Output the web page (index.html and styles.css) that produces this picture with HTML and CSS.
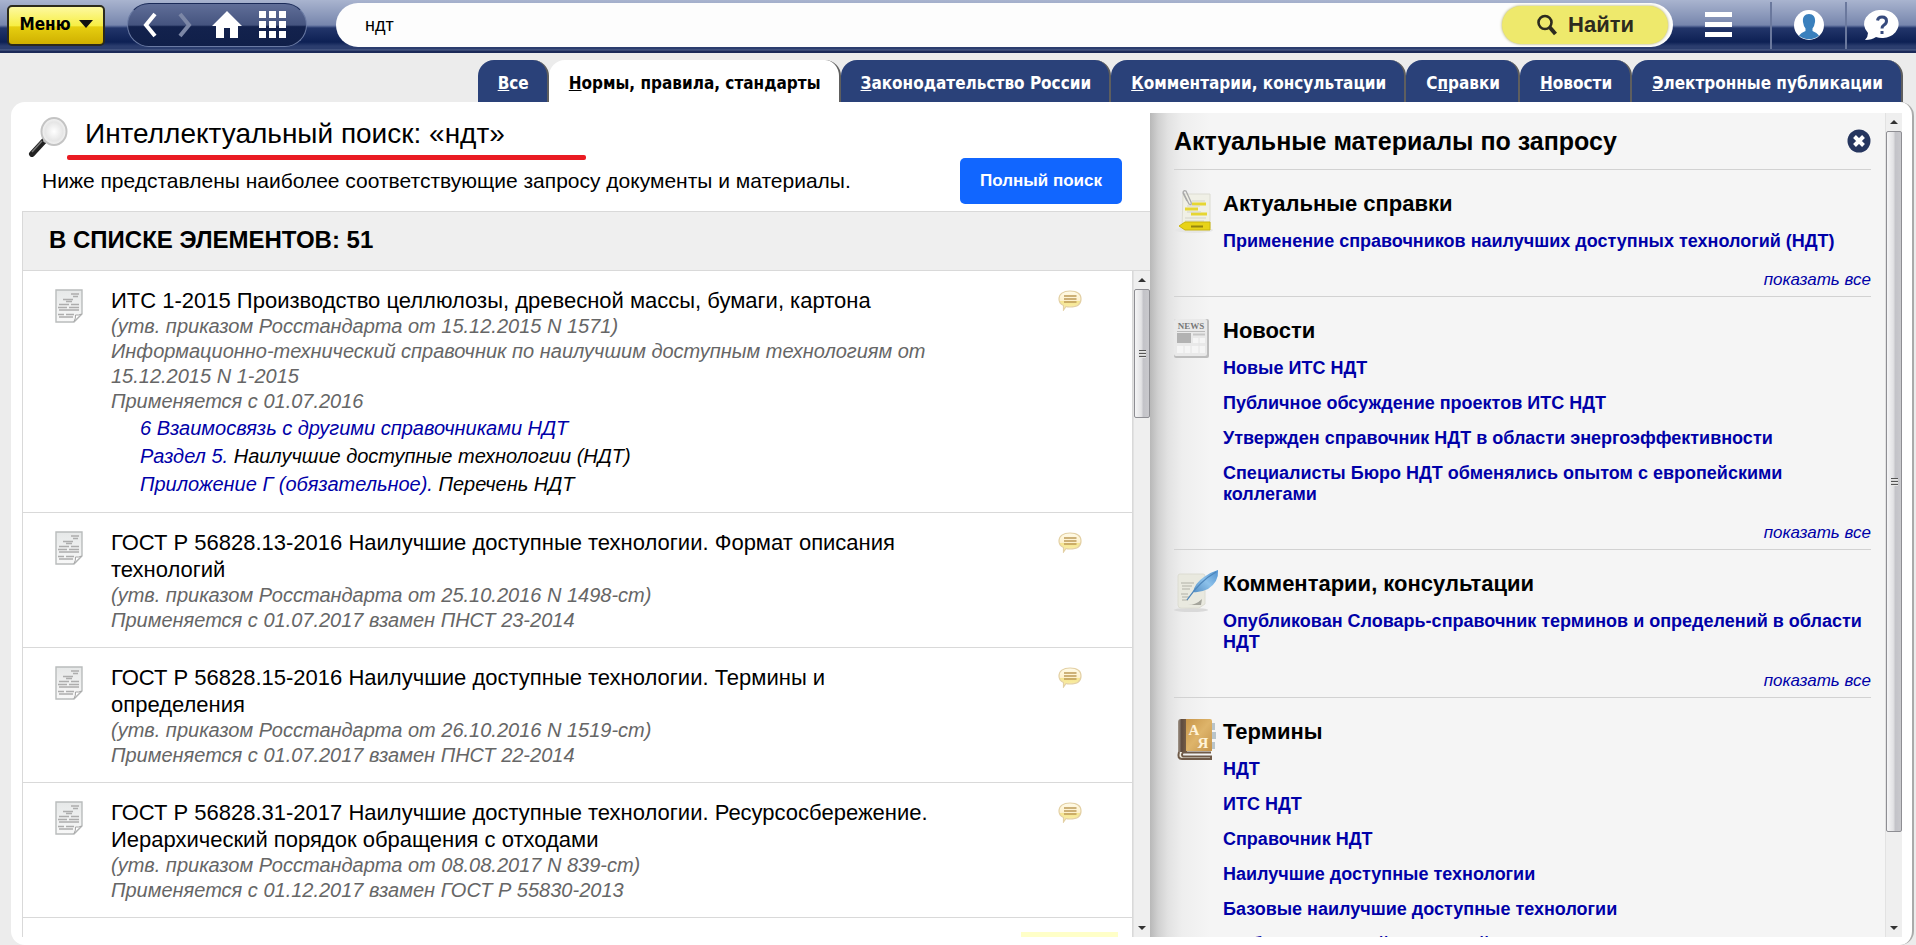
FILE: index.html
```html
<!DOCTYPE html>
<html lang="ru">
<head>
<meta charset="utf-8">
<title>Интеллектуальный поиск: «ндт»</title>
<link rel="stylesheet" href="styles.css">
</head>
<body>
<svg class="defs" aria-hidden="true">
  <defs>
    <linearGradient id="paper" x1="0" y1="0" x2="0" y2="1"><stop offset="0" stop-color="#e6e8e8"/><stop offset="1" stop-color="#f8f8f8"/></linearGradient>
    <linearGradient id="balloon" x1="0" y1="0" x2="0" y2="1"><stop offset="0" stop-color="#fffbe8"/><stop offset=".5" stop-color="#fdf0cc"/><stop offset=".55" stop-color="#f5e592"/><stop offset="1" stop-color="#fbf0ac"/></linearGradient>
    <linearGradient id="feather" x1="1" y1="0" x2="0" y2="1"><stop offset="0" stop-color="#4f90cf"/><stop offset=".5" stop-color="#8cc1ea"/><stop offset="1" stop-color="#5590c6"/></linearGradient>
    <linearGradient id="cover" x1="0" y1="0" x2="1" y2="1"><stop offset="0" stop-color="#c8964a"/><stop offset=".5" stop-color="#deb46a"/><stop offset="1" stop-color="#c4944b"/></linearGradient>
    <linearGradient id="spine" x1="0" y1="0" x2="1" y2="0"><stop offset="0" stop-color="#a3988c"/><stop offset=".4" stop-color="#5d4a3e"/><stop offset="1" stop-color="#7a6148"/></linearGradient>
    <radialGradient id="glass"><stop offset="0" stop-color="#fff"/><stop offset=".7" stop-color="#e6e6e6"/><stop offset="1" stop-color="#f4f4f4"/></radialGradient>
    <symbol id="doc" viewBox="0 0 28 34">
      <path d="M1 1H27V25L19 33H1Z" fill="url(#paper)" stroke="#b9bcbc" stroke-width="1.4"/>
      <path d="M26.500 25L19 32.500Q21 29 20.500 26Q24 26.500 26.500 25Z" fill="#fff" stroke="#a5a5a5"/>
      <path d="M16 5H24M18 7.500H23M8 10.500H18M11 12.500H17M4 15.500H14M16 15.500H24M3 18.500H12M14 18.500H24M4 21H24M3 25.500H9M11 25.500H19M4 28H18" stroke="#adadad" stroke-width="1.600"/>
    </symbol>
    <symbol id="note" viewBox="0 0 24 21">
      <path d="M12 1C19 1 23 4 23 9S19 17 12 17Q9 17 8 16.500L5.500 20V15.500Q1 13.500 1 9C1 4 5 1 12 1Z" fill="url(#balloon)" stroke="#e3d0a4" stroke-width="1.200"/>
      <path d="M6 6H18.500M6 9H18.500M6 12H18.500" stroke="#bd9a58" stroke-width="1.600"/>
    </symbol>
  </defs>
</svg>

<header class="topbar">
  <button class="menu" type="button">Меню <span class="caret"></span></button>
  <nav class="pill" aria-label="Навигация">
    <button class="icon-btn" type="button" aria-label="Назад"><svg width="18" height="26" viewBox="0 0 18 26"><path d="M14 2L5 13L14 24" fill="none" stroke="#fff" stroke-width="4"/></svg></button>
    <button class="icon-btn" type="button" aria-label="Вперёд"><svg width="18" height="26" viewBox="0 0 18 26"><path d="M4 2L13 13L4 24" fill="none" stroke="#7c87a6" stroke-width="4"/></svg></button>
    <button class="icon-btn" type="button" aria-label="Домой"><svg width="30" height="28" viewBox="0 0 30 28"><path d="M15 0L30 15H26V27H18V17H12V27H4V15H0Z" fill="#fff"/></svg></button>
    <button class="icon-btn" type="button" aria-label="Разделы"><svg width="28" height="28" viewBox="0 0 28 28"><path d="M0 0H7V7H0ZM10 0H17V7H10ZM20 0H27V7H20ZM0 10H7V17H0ZM10 10H17V17H10ZM20 10H27V17H20ZM0 20H7V27H0ZM10 20H17V27H10ZM20 20H27V27H20Z" fill="#fff"/></svg></button>
  </nav>
  <form class="search">
    <input class="query" type="text" value="ндт" aria-label="Поиск">
    <button class="find" type="button"><svg width="22" height="22" viewBox="0 0 22 22"><circle cx="9" cy="8.500" r="6.500" fill="none" stroke="#2d2b1e" stroke-width="2.600"/><path d="M13.500 13L19.500 20" stroke="#2d2b1e" stroke-width="4"/></svg>Найти</button>
  </form>
  <nav class="tools" aria-label="Инструменты">
    <button class="tool list-tool" type="button" aria-label="Список"><svg width="28" height="26" viewBox="0 0 28 26"><path d="M0 0H27V5H0ZM0 10H27V15H0ZM0 20H27V25H0Z" fill="#fff"/></svg></button>
    <button class="tool" type="button" aria-label="Профиль"><svg width="30" height="30" viewBox="0 0 30 30"><circle cx="15" cy="15" r="15" fill="#fff"/><path d="M15 4C20 4 21.500 8 21 12Q20.500 16 18.500 18.500V21Q23 22.500 25 25.500A15 15 0 0 1 5 25.500Q7 22.500 11.500 21V18.500Q9.500 16 9 12C8.500 8 10 4 15 4Z" fill="#3a80bd"/></svg></button>
    <button class="tool help-tool" type="button" aria-label="Справка"><svg width="36" height="31" viewBox="0 0 36 31"><path d="M18 0A16.500 14 0 1 1 12 27Q8 30 1 30Q4 27 4 23A16.500 14 0 0 1 18 0Z" fill="#fff"/><path d="M13.500 10.500Q14 7 18 7Q22.500 7 22.500 11Q22.500 13.500 20 15Q18 16.300 18 18.500M18 21V24" fill="none" stroke="#364a7d" stroke-width="3"/></svg></button>
  </nav>
</header>

<nav class="tabs" aria-label="Разделы">
  <a class="tab" href="#"><u>В</u>се</a>
  <a class="tab active" href="#"><u>Н</u>ормы, правила, стандарты</a>
  <a class="tab" href="#"><u>З</u>аконодательство России</a>
  <a class="tab" href="#"><u>К</u>омментарии, консультации</a>
  <a class="tab" href="#">С<u>п</u>равки</a>
  <a class="tab" href="#"><u>Н</u>овости</a>
  <a class="tab" href="#"><u>Э</u>лектронные публикации</a>
</nav>

<main class="panel">
  <section class="results">
    <div class="title-row">
      <svg class="lens" width="40" height="40" viewBox="0 0 40 40"><path d="M16 24L4 37" stroke="#222" stroke-width="6" stroke-linecap="round"/><path d="M14 24L4 35" stroke="#777" stroke-width="1.500"/><path d="M20 20L16 25" stroke="#bbb" stroke-width="3"/><ellipse cx="26" cy="14.500" rx="12.500" ry="13.500" fill="url(#glass)" stroke="#c4c4c4" stroke-width="2"/></svg>
      <h1 class="title">Интеллектуальный поиск: «ндт»</h1>
    </div>
    <div class="intro-row">
      <p class="intro">Ниже представлены наиболее соответствующие запросу документы и материалы.</p>
      <button class="full" type="button">Полный поиск</button>
    </div>
    <div class="list">
      <h2 class="list-head">В СПИСКЕ ЭЛЕМЕНТОВ: 51</h2>
      <div class="list-body">
        <div class="items">
          <article class="item">
            <svg class="doc" width="28" height="34"><use href="#doc"/></svg>
            <div class="text">
              <h3 class="name">ИТС 1-2015 Производство целлюлозы, древесной массы, бумаги, картона</h3>
              <p class="meta">(утв. приказом Росстандарта от 15.12.2015 N 1571)</p>
              <p class="meta">Информационно-технический справочник по наилучшим доступным технологиям от 15.12.2015 N 1-2015</p>
              <p class="meta">Применяется с 01.07.2016</p>
              <p class="part"><a href="#">6 Взаимосвязь с другими справочниками НДТ</a></p>
              <p class="part"><a href="#">Раздел 5.</a> Наилучшие доступные технологии (НДТ)</p>
              <p class="part"><a href="#">Приложение Г (обязательное).</a> Перечень НДТ</p>
            </div>
            <svg class="note" width="24" height="21"><use href="#note"/></svg>
          </article>
          <article class="item">
            <svg class="doc" width="28" height="34"><use href="#doc"/></svg>
            <div class="text">
              <h3 class="name">ГОСТ Р 56828.13-2016 Наилучшие доступные технологии. Формат описания технологий</h3>
              <p class="meta">(утв. приказом Росстандарта от 25.10.2016 N 1498-ст)</p>
              <p class="meta">Применяется с 01.07.2017 взамен ПНСТ 23-2014</p>
            </div>
            <svg class="note" width="24" height="21"><use href="#note"/></svg>
          </article>
          <article class="item">
            <svg class="doc" width="28" height="34"><use href="#doc"/></svg>
            <div class="text">
              <h3 class="name">ГОСТ Р 56828.15-2016 Наилучшие доступные технологии. Термины и определения</h3>
              <p class="meta">(утв. приказом Росстандарта от 26.10.2016 N 1519-ст)</p>
              <p class="meta">Применяется с 01.07.2017 взамен ПНСТ 22-2014</p>
            </div>
            <svg class="note" width="24" height="21"><use href="#note"/></svg>
          </article>
          <article class="item">
            <svg class="doc" width="28" height="34"><use href="#doc"/></svg>
            <div class="text">
              <h3 class="name">ГОСТ Р 56828.31-2017 Наилучшие доступные технологии. Ресурсосбережение. Иерархический порядок обращения с отходами</h3>
              <p class="meta">(утв. приказом Росстандарта от 08.08.2017 N 839-ст)</p>
              <p class="meta">Применяется с 01.12.2017 взамен ГОСТ Р 55830-2013</p>
            </div>
            <svg class="note" width="24" height="21"><use href="#note"/></svg>
          </article>
          <div class="next"><span class="mark"></span></div>
        </div>
        <div class="scroll" aria-hidden="true"><i class="up"></i><span class="track"><b class="thumb short"><s></s></b></span><i class="down"></i></div>
      </div>
    </div>
  </section>

  <aside class="side">
    <div class="side-body">
      <div class="side-head">
        <h2>Актуальные материалы по запросу</h2>
        <button class="close" type="button" aria-label="Закрыть"><svg width="24" height="24" viewBox="0 0 24 24"><circle cx="12" cy="12" r="11.500" fill="#26365f"/><path d="M7.500 7.500L16.500 16.500M16.500 7.500L7.500 16.500" stroke="#fff" stroke-width="4"/></svg></button>
      </div>
      <section class="group">
        <svg class="pic" width="42" height="44" viewBox="0 0 42 44">
          <ellipse cx="20" cy="40" rx="19" ry="3" fill="#e6e6e6"/>
          <path d="M9 4H36V38H8Z" fill="#f0f0e6" stroke="#dcdcd2"/>
          <path d="M18 14H32M11 19H24M17 24H33" stroke="#e6d633" stroke-width="3"/>
          <path d="M18 11H31M13 16H26M13 22H27M11 28H32M11 31H30" stroke="#d4d4c9" stroke-width="1"/>
          <path d="M9 2L15 14Q18 16 17 12L12 1Q9 0 9 3L13 11" fill="none" stroke="#a9a9a9" stroke-width="1.300"/>
          <path d="M5 36L11 32H36V40H11Z" fill="#e8d318" stroke="#c9b510"/><path d="M17 36.500H29" stroke="#94850f" stroke-width="2"/>
        </svg>
        <div class="links">
          <h3>Актуальные справки</h3>
          <a href="#">Применение справочников наилучших доступных технологий (НДТ)</a>
        </div>
        <a class="all" href="#">показать все</a>
      </section>
      <section class="group">
        <svg class="pic" width="42" height="44" viewBox="0 0 42 44">
          <rect x="0" y="2" width="35" height="39" rx="2" fill="#bdbdbd"/><rect x="0" y="2" width="33" height="37" rx="2" fill="#e9e9e9"/>
          <text x="17" y="12" class="news-word">NEWS</text>
          <path d="M3 14.500H31" stroke="#bbb"/><rect x="3" y="16" width="14" height="10" fill="#b2b2b2"/>
          <path d="M19 17.500H31" stroke="#c6c6c6" stroke-width="2"/><path d="M19 21H31V26H19ZM3 29H31V36H3Z" fill="#f5f5f5"/><path d="M25 21V36M10 29V36M17 29V36" stroke="#e4e4e4"/>
        </svg>
        <div class="links">
          <h3>Новости</h3>
          <a href="#">Новые ИТС НДТ</a>
          <a href="#">Публичное обсуждение проектов ИТС НДТ</a>
          <a href="#">Утвержден справочник НДТ в области энергоэффективности</a>
          <a href="#">Специалисты Бюро НДТ обменялись опытом с европейскими коллегами</a>
        </div>
        <a class="all" href="#">показать все</a>
      </section>
      <section class="group">
        <svg class="pic" width="46" height="44" viewBox="0 0 46 44">
          <ellipse cx="17" cy="40" rx="17" ry="2" fill="#d9d9d9"/>
          <path d="M6 4H29Q31 4 31 6V34L25 38H7Q4 38 4 35V6Q4 4 6 4Z" fill="#e9e9df" stroke="#dcdcd2"/>
          <path d="M7 13H20M8 16H18M8 19H16M7 24H14M8 27H15M8 30H14" stroke="#c4c4ba" stroke-width="1.300"/>
          <path d="M14 35Q22 35 28 29L27 35Z" fill="#a5a59c"/>
          <path d="M44 0Q45 12 34 19Q26 23 19 22Q21 13 30 7Q37 2 44 0Z" fill="url(#feather)"/><path d="M42 2Q26 11 13 30" fill="none" stroke="#4d86bb" stroke-width="1.300"/>
        </svg>
        <div class="links">
          <h3>Комментарии, консультации</h3>
          <a href="#">Опубликован Словарь-справочник терминов и определений в области НДТ</a>
        </div>
        <a class="all" href="#">показать все</a>
      </section>
      <section class="group">
        <svg class="pic" width="42" height="44" viewBox="0 0 42 44">
          <path d="M37 5H41V12H37ZM38 14H42V21H38ZM37 24H41V31H37Z" fill="#b9c4c9"/>
          <path d="M4 4Q4 1 7 1H13V35H4Z" fill="url(#spine)"/><path d="M12 1H36Q38 1 38 3V33H12Z" fill="url(#cover)"/>
          <path d="M5 34Q3 41 8 41H37V38.500H9Q7 37 9 34.500H37" fill="#f1ece0" stroke="#6f5a48" stroke-width="2"/>
          <text x="20" y="17" class="book-letter">А</text><text x="29" y="30" class="book-letter">Я</text>
        </svg>
        <div class="links">
          <h3>Термины</h3>
          <a href="#">НДТ</a>
          <a href="#">ИТС НДТ</a>
          <a href="#">Справочник НДТ</a>
          <a href="#">Наилучшие доступные технологии</a>
          <a href="#">Базовые наилучшие доступные технологии</a>
          <a href="#">Выбор наилучшей доступной</a>
        </div>
      </section>
    </div>
    <div class="scroll" aria-hidden="true"><i class="up"></i><span class="track"><b class="thumb long"><s></s></b></span><i class="down"></i></div>
  </aside>
</main>
</body>
</html>
```
FILE: styles.css
```css
* { box-sizing: border-box; }
html, body { height: 100%; }
body {
  margin: 0;
  display: flex;
  flex-direction: column;
  overflow: hidden;
  background: #ececec;
  color: #000;
  font-family: "Liberation Sans", Arial, sans-serif;
}
h1, h2, h3, p { margin: 0; }
button, input { font-family: inherit; border: 0; margin: 0; }
a { color: #0000a8; text-decoration: none; }
svg { display: block; flex: none; }
.defs { position: absolute; width: 0; height: 0; }

.topbar {
  flex: none;
  height: 53px;
  padding: 3px 0 6px 7px;
  display: flex;
  align-items: center;
  background: linear-gradient(#a9b4cf 0, #7786ad 25px, #5c6d9b 26px, #22356a 28px, #0d2054 42px, #2b3d6e 46px, #2b3d6e 49px, #56668f 50px, #1b2a58 51px, #1b2a58 53px);
}
.menu {
  width: 98px;
  height: 41px;
  display: flex;
  align-items: center;
  justify-content: center;
  gap: 8px;
  padding: 0 0 2px;
  border: 2px solid #2b2a1c;
  border-radius: 5px;
  background: linear-gradient(#fdf9a0, #f7ee45 50%, #e6ce10 54%, #cfb000);
  font-family: "DejaVu Sans Condensed", "DejaVu Sans", sans-serif;
  font-size: 17px;
  font-weight: bold;
}
.caret { border: 7px solid transparent; border-top: 8px solid #111; border-bottom: 0; }
.pill {
  width: 180px;
  height: 44px;
  margin-left: 22px;
  padding: 0 19px 0 13px;
  display: flex;
  align-items: center;
  justify-content: space-between;
  border: 1px solid #6a7aa3;
  border-top-color: #1a2a58;
  border-radius: 22px;
  background: linear-gradient(#606e98, #45547f 50%, #13224d 54%, #101f49);
}
.icon-btn { padding: 0; background: none; }
.search {
  flex: 1;
  height: 44px;
  margin-left: 29px;
  padding: 0 5px 0 29px;
  display: flex;
  align-items: center;
  border-radius: 22px;
  background: #fdfdfd;
}
.query { flex: 1; min-width: 0; padding: 0; background: none; outline: 0; font-size: 18px; line-height: 24px; }
.find {
  width: 166px;
  height: 38px;
  display: flex;
  align-items: center;
  justify-content: center;
  gap: 10px;
  padding: 0;
  border-radius: 19px;
  background: #eee96c;
  box-shadow: 0 0 3px #a8a45a;
  color: #2d2b1e;
  font-size: 22px;
  font-weight: bold;
}
.tools { flex: none; height: 47px; display: flex; }
.tool {
  width: 75px;
  height: 47px;
  display: flex;
  align-items: center;
  justify-content: center;
  padding: 0;
  background: none;
}
.list-tool { width: 97px; padding-right: 6px; }
.help-tool { width: 71px; }
.tool + .tool { border-left: 2px solid #6a789d; }

.tabs { flex: none; display: flex; justify-content: flex-end; padding: 7px 13px 0 0; }
.tab {
  height: 42px;
  padding: 0 18px 0 20px;
  border-right: 2px solid #5e5e5e;
  border-radius: 16px 16px 0 0;
  background: #2a4179;
  color: #fff;
  font-family: "DejaVu Sans Condensed", "DejaVu Sans", sans-serif;
  font-size: 17px;
  font-weight: bold;
  line-height: 46px;
  white-space: nowrap;
}
.tab.active { background: #fff; color: #000; }

.panel {
  flex: 1;
  min-height: 0;
  margin: 0 2px 0 11px;
  padding: 11px 10px 8px 11px;
  display: flex;
  border-right: 2px solid #aaa;
  border-radius: 14px;
  background: #fff;
}
.results { flex: 3; min-width: 0; display: flex; flex-direction: column; }
.title-row { display: flex; padding: 4px 0 0 6px; height: 42px; }
.title {
  position: relative;
  margin-left: 17px;
  font-size: 28px;
  font-weight: normal;
  line-height: 34px;
  white-space: nowrap;
}
/* marker stroke drawn over the heading */
.title::after {
  content: "";
  position: absolute;
  left: -18px;
  top: 38px;
  width: 519px;
  height: 5px;
  border-radius: 2px;
  background: #ea1b22;
}
.intro-row {
  display: flex;
  justify-content: space-between;
  padding: 3px 28px 7px 20px;
}
.intro { font-size: 21px; line-height: 46px; }
.full { width: 162px; height: 46px; padding: 0; border-radius: 5px; background: #1166ff; color: #fff; font-size: 17px; font-weight: bold; }
.list { flex: 1; min-height: 0; display: flex; flex-direction: column; border-left: 1px solid #d9d9d9; }
.list-head {
  flex: none;
  height: 60px;
  padding-left: 26px;
  border: 1px solid #d9d9d9;
  border-width: 1px 0;
  background: #efefef;
  font-size: 24px;
  line-height: 56px;
}
.list-body { flex: 1; min-height: 0; display: flex; }
.items { flex: 1; min-width: 0; overflow: hidden; border-right: 1px solid #d9d9d9; }
.item { display: flex; padding: 16px 50px 14px 32px; border-bottom: 1px solid #d9d9d9; }
.doc { margin-top: 2px; }
.text { flex: 1; padding: 0 100px 0 28px; }
.note { margin-top: 3px; }
.name { font-size: 22px; font-weight: normal; line-height: 27px; }
.meta { color: #666; font-size: 20px; font-style: italic; line-height: 25px; }
.part { padding-left: 29px; font-size: 20px; font-style: italic; line-height: 28px; }
.next { padding: 14px 14px 0 0; display: flex; justify-content: flex-end; }
.mark { width: 97px; height: 30px; background: #ffffc8; }

.scroll { flex: none; width: 17px; display: flex; flex-direction: column; align-items: center; background: #efefef; border-left: 1px solid #e2e2e2; }
.up, .down { height: 18px; display: flex; align-items: center; }
.up::before, .down::before { content: ""; border: 4px solid transparent; }
.up::before { border-top: 0; border-bottom: 4px solid #333; }
.down::before { border-bottom: 0; border-top: 4px solid #333; }
.track { flex: 1; width: 100%; }
.thumb {
  width: 16px;
  display: flex;
  align-items: center;
  justify-content: center;
  border: 1px solid #8e8e93;
  border-radius: 2px;
  background: linear-gradient(90deg, #f5f5f6, #e2e2e4 45%, #c3c3c8 60%, #c9c9cd);
}
.thumb s { width: 7px; height: 8px; background: repeating-linear-gradient(#555 0, #555 1px, #eee 1px, #ccc 3px); }
.short { height: 129px; }
.long { height: 89%; }

.side {
  flex: 2;
  min-width: 0;
  display: flex;
  background: linear-gradient(90deg, #b8b8b8 0, #d0d0d0 8px, #e2e2e2 18px, #eee 32px, #f5f5f5 60px);
}
.side-body { flex: 1; min-width: 0; overflow: hidden; padding: 0 14px 0 24px; }
.side-head { height: 57px; display: flex; justify-content: space-between; align-items: center; border-bottom: 1px solid #d2d2d2; }
.side-head h2 { font-size: 25px; line-height: 30px; }
.close { padding: 0; background: none; }
.group { display: grid; grid-template-columns: 49px minmax(0, 1fr); padding: 19px 0 0; border-bottom: 1px solid #d2d2d2; }
.group .pic { margin-top: 1px; }
.links { display: flex; flex-direction: column; gap: 14px; padding-bottom: 17px; }
.links h3 { font-size: 22px; line-height: 30px; margin-bottom: -2px; }
.links a { font-size: 18px; font-weight: bold; line-height: 21px; }
.all { grid-column: 1 / 3; justify-self: end; padding-bottom: 6px; font-size: 17px; font-style: italic; line-height: 21px; }
.news-word { font: bold 9px "Liberation Serif", serif; text-anchor: middle; fill: #777; }
.book-letter { font: bold 15px "Liberation Serif", serif; text-anchor: middle; fill: #fff3d8; }
```
